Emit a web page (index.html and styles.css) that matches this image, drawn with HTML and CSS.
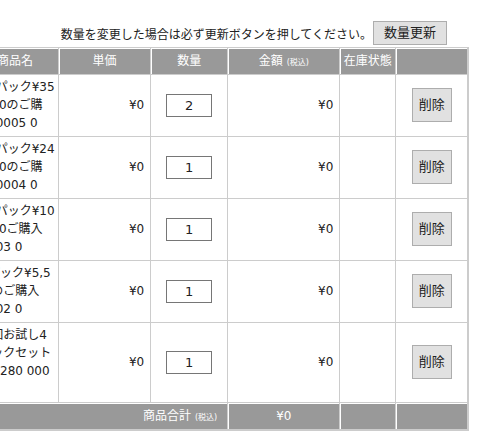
FILE: index.html
```html
<!DOCTYPE html>
<html lang="ja">
<head>
    <meta charset="UTF-8">
    <meta name="viewport" content="width=device-width, initial-scale=1.0">
    <title>カート</title>
    <link rel="stylesheet" href="styles.css">
</head>
<body>
    <form class="cart" method="POST">
        <div class="cart-note">
            <span>数量を変更した場合は必ず更新ボタンを押してください。</span>
            <button type="submit" class="btn btn-update">数量更新</button>
        </div>

        <table class="cart-table">
            <colgroup>
                <col class="col-name">
                <col class="col-price">
                <col class="col-qty">
                <col class="col-amount">
                <col class="col-stock">
                <col class="col-action">
            </colgroup>
            <thead>
                <tr>
                    <th>商品名</th>
                    <th>単価</th>
                    <th>数量</th>
                    <th>金額<span class="tax">(税込)</span></th>
                    <th>在庫状態</th>
                    <th></th>
                </tr>
            </thead>
            <tbody>
                <tr>
                    <td class="name">1袋パック¥35<br>0000のご購<br>入10005 0</td>
                    <td class="price">¥0</td>
                    <td class="qty"><input type="text" name="qty[]" value="2"></td>
                    <td class="price">¥0</td>
                    <td></td>
                    <td class="action"><button type="button" class="btn btn-delete">削除</button></td>
                </tr>
                <tr>
                    <td class="name">1袋パック¥24<br>0000のご購<br>入10004 0</td>
                    <td class="price">¥0</td>
                    <td class="qty"><input type="text" name="qty[]" value="1"></td>
                    <td class="price">¥0</td>
                    <td></td>
                    <td class="action"><button type="button" class="btn btn-delete">削除</button></td>
                </tr>
                <tr>
                    <td class="name">1袋パック¥10<br>0000ご購入<br>様103 0</td>
                    <td class="price">¥0</td>
                    <td class="qty"><input type="text" name="qty[]" value="1"></td>
                    <td class="price">¥0</td>
                    <td></td>
                    <td class="action"><button type="button" class="btn btn-delete">削除</button></td>
                </tr>
                <tr>
                    <td class="name">袋パック¥5,5<br>00のご購入<br>様102 0</td>
                    <td class="price">¥0</td>
                    <td class="qty"><input type="text" name="qty[]" value="1"></td>
                    <td class="price">¥0</td>
                    <td></td>
                    <td class="action"><button type="button" class="btn btn-delete">削除</button></td>
                </tr>
                <tr>
                    <td class="name">10回お試し4<br>¥1ックセット<br>定価280 000<br>円</td>
                    <td class="price">¥0</td>
                    <td class="qty"><input type="text" name="qty[]" value="1"></td>
                    <td class="price">¥0</td>
                    <td></td>
                    <td class="action"><button type="button" class="btn btn-delete">削除</button></td>
                </tr>
            </tbody>
            <tfoot>
                <tr>
                    <td colspan="3" class="total-label">商品合計<span class="tax">(税込)</span></td>
                    <td class="total-sum">¥0</td>
                    <td></td>
                    <td></td>
                </tr>
            </tfoot>
        </table>
    </form>
</body>
</html>
```

FILE: styles.css
```css
/* Base */
body {
    margin: 0;
    font-family: "DejaVu Sans", "Noto Sans CJK JP", sans-serif;
    font-size: 12px;
    color: #222;
}

.cart {
    width: 498px;
    margin-left: -29px;
    padding-top: 21px;
}

.cart-note {
    display: flex;
    justify-content: flex-end;
    align-items: center;
    gap: 1px;
    height: 24px;
    margin: 0 22px 2px 0;
}

.btn {
    font-family: "DejaVu Sans", "Noto Sans CJK JP", sans-serif;
    font-size: 13px;
    line-height: 18px;
    color: #222;
    background-color: #e1e1e1;
    border: 1px solid #adadad;
    border-radius: 0;
    cursor: pointer;
}

.btn-update {
    height: 24px;
    padding: 0 10px;
}

.btn-delete {
    height: 34px;
    padding: 0 6px;
}

.cart-table {
    width: 498px;
    table-layout: fixed;
    border-collapse: collapse;
    border-right: 2px solid #ccc;
    border-bottom: 2px solid #ccc;
}

.col-name { width: 87px; }
.col-price { width: 92px; }
.col-qty { width: 77px; }
.col-amount { width: 112px; }
.col-stock { width: 56px; }
.col-action { width: 72px; }

.cart-table th,
.cart-table td {
    border: 1px solid #ccc;
    line-height: 18px;
    vertical-align: middle;
}

.cart-table th,
.cart-table tfoot td {
    height: 18px;
    padding: 4px 2px;
    background-color: #999;
    color: #fff;
    font-weight: normal;
    text-align: center;
    box-shadow: inset 1px 1px 0 #fff;
}

.cart-table tbody td {
    padding: 3px 6px 4px;
}

.tax {
    margin-left: 4px;
    font-size: 8px;
    line-height: 1;
}

.cart-table td.name {
    padding-left: 4px;
    white-space: nowrap;
}

.price {
    text-align: right;
}

.qty,
.action {
    text-align: center;
}

.qty input {
    width: 46px;
    height: 23px;
    box-sizing: border-box;
    padding: 0;
    border: 1px solid #767676;
    font-family: "DejaVu Sans", sans-serif;
    font-size: 13px;
    color: #222;
    text-align: center;
}

.cart-table tfoot td.total-label {
    padding-right: 10px;
    text-align: right;
}
```
